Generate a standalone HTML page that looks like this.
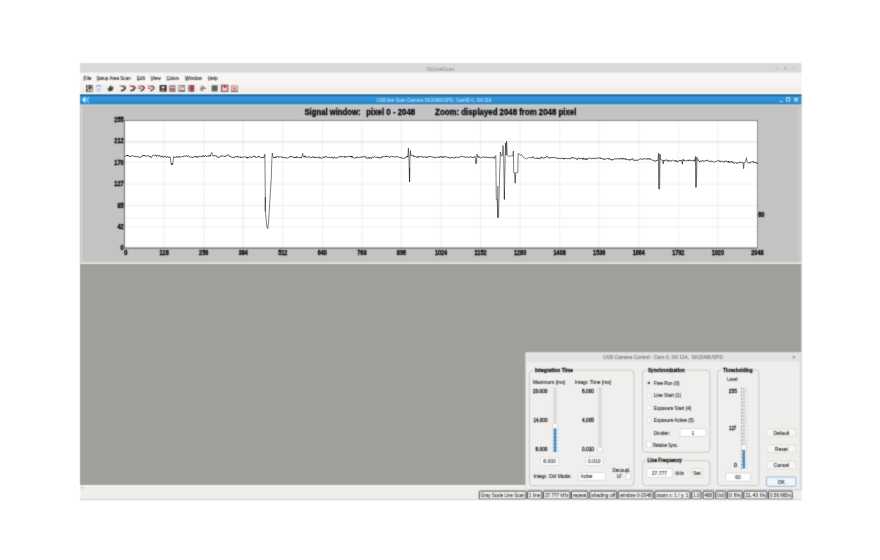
<!DOCTYPE html>
<html lang="en">
<head>
<meta charset="utf-8">
<title>SkLineScan</title>
<style>
html,body{margin:0;padding:0;background:#ffffff;}
body{width:880px;height:560px;overflow:hidden;position:relative;}
svg{position:absolute;left:0;top:0;display:block;}
svg text{font-family:"Liberation Sans",sans-serif;white-space:pre;}
</style>
</head>
<body>
<svg width="880" height="560" viewBox="0 0 880 560" role="img" aria-label="SkLineScan application window">
<defs><filter id="soft" filterUnits="userSpaceOnUse" x="0" y="0" width="880" height="560" color-interpolation-filters="sRGB"><feConvolveMatrix order="3" kernelMatrix="0.062 0.249 0.062 0.249 1 0.249 0.062 0.249 0.062" divisor="2.244" edgeMode="duplicate" preserveAlpha="false"/></filter></defs>
<g filter="url(#soft)">
<rect x="0" y="0" width="880" height="560" fill="#ffffff"/>
<g id="main-window">
<path d="M80.0,72.8 V64.5 Q80.0,63.0 81.5,63.0 H800.0 Q801.5,63.0 801.5,64.5 V72.8 Z" fill="#d9d9d9"/>
<text transform="translate(440.30,70.84) scale(1,1.08)" font-size="5" fill="#9c9c9c" stroke="#9c9c9c" stroke-width="0.12" text-anchor="middle" font-weight="normal" textLength="28.00" lengthAdjust="spacingAndGlyphs" >SkLineScan</text>
<line x1="775.20" y1="68.60" x2="778.80" y2="68.60" stroke="#b4b4b4" stroke-width="0.7" />
<line x1="783.60" y1="68.30" x2="787.00" y2="68.30" stroke="#b4b4b4" stroke-width="0.7" />
<line x1="785.30" y1="66.60" x2="785.30" y2="70.00" stroke="#b4b4b4" stroke-width="0.7" />
<line x1="792.50" y1="66.80" x2="795.50" y2="69.80" stroke="#b4b4b4" stroke-width="0.7" />
<line x1="795.50" y1="66.80" x2="792.50" y2="69.80" stroke="#b4b4b4" stroke-width="0.7" />
<rect x="80.00" y="72.80" width="721.50" height="10.40" fill="#f7f6f4" />
<defs><linearGradient id="tb" x1="0" y1="0" x2="0" y2="1"><stop offset="0" stop-color="#f9f2ee"/><stop offset="0.35" stop-color="#f5f0ec"/><stop offset="0.6" stop-color="#f0eeeb"/><stop offset="1" stop-color="#efeeeb"/></linearGradient></defs>
<rect x="80.00" y="83.20" width="721.50" height="10.30" fill="url(#tb)" />
<rect x="80.00" y="93.20" width="721.50" height="1.50" fill="#ffffff" />
</g>
<g id="menubar">
<text transform="translate(83.50,79.58) scale(1,1.08)" font-size="5.6" fill="#262626" stroke="#262626" stroke-width="0.12" text-anchor="start" font-weight="normal" textLength="8.10" lengthAdjust="spacingAndGlyphs" >File</text>
<line x1="83.50" y1="80.20" x2="85.80" y2="80.20" stroke="#444" stroke-width="0.5" />
<text transform="translate(96.50,79.58) scale(1,1.08)" font-size="5.6" fill="#262626" stroke="#262626" stroke-width="0.12" text-anchor="start" font-weight="normal" textLength="34.20" lengthAdjust="spacingAndGlyphs" >Setup Area Scan</text>
<line x1="96.50" y1="80.20" x2="99.10" y2="80.20" stroke="#444" stroke-width="0.5" />
<text transform="translate(137.00,79.58) scale(1,1.08)" font-size="5.6" fill="#262626" stroke="#262626" stroke-width="0.12" text-anchor="start" font-weight="normal" textLength="8.00" lengthAdjust="spacingAndGlyphs" >Edit</text>
<line x1="137.00" y1="80.20" x2="139.60" y2="80.20" stroke="#444" stroke-width="0.5" />
<text transform="translate(150.40,79.58) scale(1,1.08)" font-size="5.6" fill="#262626" stroke="#262626" stroke-width="0.12" text-anchor="start" font-weight="normal" textLength="10.30" lengthAdjust="spacingAndGlyphs" >View</text>
<line x1="150.40" y1="80.20" x2="153.00" y2="80.20" stroke="#444" stroke-width="0.5" />
<text transform="translate(166.50,79.58) scale(1,1.08)" font-size="5.6" fill="#262626" stroke="#262626" stroke-width="0.12" text-anchor="start" font-weight="normal" textLength="12.50" lengthAdjust="spacingAndGlyphs" >Colors</text>
<line x1="166.50" y1="80.20" x2="169.30" y2="80.20" stroke="#444" stroke-width="0.5" />
<text transform="translate(185.00,79.58) scale(1,1.08)" font-size="5.6" fill="#262626" stroke="#262626" stroke-width="0.12" text-anchor="start" font-weight="normal" textLength="17.00" lengthAdjust="spacingAndGlyphs" >Window</text>
<line x1="185.00" y1="80.20" x2="188.60" y2="80.20" stroke="#444" stroke-width="0.5" />
<text transform="translate(208.00,79.58) scale(1,1.08)" font-size="5.6" fill="#262626" stroke="#262626" stroke-width="0.12" text-anchor="start" font-weight="normal" textLength="9.60" lengthAdjust="spacingAndGlyphs" >Help</text>
<line x1="208.00" y1="80.20" x2="210.80" y2="80.20" stroke="#444" stroke-width="0.5" />
</g>
<g id="toolbar">
<rect x="86.00" y="85.20" width="6.60" height="6.50" fill="#3c3c3c" />
<rect x="87.00" y="86.10" width="1.90" height="1.40" fill="#e2e2e2" />
<rect x="90.40" y="86.00" width="1.70" height="1.00" fill="#a0a0a0" />
<rect x="86.00" y="87.90" width="2.60" height="0.80" fill="#e9e7e5" />
<rect x="90.60" y="87.90" width="2.00" height="0.80" fill="#d5d3d1" />
<rect x="87.60" y="89.30" width="1.90" height="1.70" fill="#f2f2f2" />
<rect x="90.20" y="89.30" width="1.80" height="1.70" fill="#f6f6f6" />
<rect x="95.90" y="85.20" width="5.30" height="6.30" fill="#d3d6ee" />
<rect x="95.90" y="85.20" width="5.30" height="1.20" fill="#a0a5d2" />
<rect x="96.80" y="86.90" width="3.60" height="1.70" fill="#f6f7fd" />
<rect x="98.00" y="88.60" width="1.00" height="2.50" fill="#8d94c9" />
<rect x="96.60" y="89.00" width="1.20" height="2.00" fill="#eceef9" />
<rect x="99.30" y="89.00" width="1.20" height="2.00" fill="#eff0fa" />
<path d="M107.7,89.3 L110.5,85.6 L113.6,87.3 L112.3,90.4 L109.6,91.4 Z" fill="#363837" />
<ellipse cx="109.2" cy="89.5" rx="1.35" ry="1.5" fill="#1a6a52"/>
<rect x="111.00" y="86.80" width="1.40" height="0.80" fill="#c9c9c9" />
<path d="M119.70,85.8 L122.40,86.2" fill="none" stroke="#d8345c" stroke-width="1.1" />
<path d="M122.20,86.2 Q125.90,86.6 125.40,88.1 Q124.60,89.9 120.90,91.0" fill="none" stroke="#3a3839" stroke-width="1.45" />
<path d="M129.25,85.8 L131.95,86.2" fill="none" stroke="#d8345c" stroke-width="1.1" />
<path d="M131.75,86.2 Q135.45,86.6 134.95,88.1 Q134.15,89.9 130.45,91.0" fill="none" stroke="#3a3839" stroke-width="1.45" />
<path d="M134.6,86.9 L135.6,85.9" fill="none" stroke="#8c8c8c" stroke-width="0.7" />
<rect x="138.00" y="85.60" width="2.80" height="1.00" fill="#e23258" />
<rect x="137.90" y="87.70" width="3.50" height="1.10" fill="#e23258" />
<path d="M141.20,86.0 Q144.70,86.6 144.20,88.0 Q143.50,89.8 140.60,91.0" fill="none" stroke="#3f393b" stroke-width="1.4" />
<rect x="147.80" y="85.60" width="2.80" height="1.00" fill="#e23258" />
<rect x="147.70" y="87.70" width="3.50" height="1.10" fill="#e23258" />
<path d="M151.00,86.0 Q154.50,86.6 154.00,88.0 Q153.30,89.8 150.40,91.0" fill="none" stroke="#575153" stroke-width="1.4" />
<rect x="159.60" y="85.10" width="6.70" height="6.40" fill="#2e2e2e" />
<rect x="161.60" y="86.40" width="3.10" height="1.70" fill="#f2f2f2" />
<rect x="161.40" y="88.40" width="3.30" height="1.60" fill="#c2526c" />
<rect x="160.40" y="90.20" width="4.40" height="0.80" fill="#7a7a7a" />
<rect x="165.10" y="85.10" width="1.20" height="6.40" fill="#141414" />
<rect x="169.10" y="85.20" width="6.40" height="6.30" fill="#8d8587" />
<rect x="169.90" y="86.00" width="4.90" height="0.60" fill="#a9a3a4" />
<rect x="169.90" y="87.10" width="4.90" height="0.80" fill="#ecdadf" />
<rect x="169.90" y="88.30" width="4.90" height="1.30" fill="#d04a6c" />
<rect x="169.90" y="89.90" width="4.90" height="0.50" fill="#e3c3cb" />
<rect x="169.90" y="90.70" width="5.60" height="0.80" fill="#8a3048" />
<rect x="178.40" y="85.10" width="6.50" height="6.40" fill="#7d7b7b" />
<rect x="179.40" y="86.10" width="4.60" height="4.20" fill="#f1eeee" />
<path d="M180.6,88.6 L184.2,85.7" fill="none" stroke="#df5c80" stroke-width="1.25" />
<rect x="179.20" y="90.20" width="5.70" height="1.30" fill="#5f5f5f" />
<rect x="188.00" y="85.20" width="1.60" height="6.20" fill="#8a8686" />
<rect x="189.90" y="85.10" width="4.30" height="6.50" fill="#8a2a46" />
<rect x="190.60" y="86.70" width="3.00" height="0.80" fill="#d9889e" />
<rect x="190.60" y="89.20" width="3.00" height="0.80" fill="#cf7a92" />
<path d="M201.6,85.7 L203.6,87.1" fill="none" stroke="#505050" stroke-width="1.0" />
<path d="M200.0,88.1 H205.0" fill="none" stroke="#484848" stroke-width="1.0" />
<path d="M204.6,87.2 L206.3,88.2 L204.6,89.1 Z" fill="#5c5c5c" />
<path d="M200.3,90.0 H203.4" fill="none" stroke="#555" stroke-width="1.1" />
<rect x="211.70" y="85.20" width="5.90" height="6.20" fill="#5b5f5d" />
<rect x="211.70" y="85.20" width="5.90" height="0.80" fill="#8f9290" />
<path d="M213.6,86.2 V91.3 M215.7,86.2 V91.3" fill="none" stroke="#6d716f" stroke-width="0.5" />
<rect x="220.60" y="84.20" width="8.00" height="7.80" fill="#dad6d3" />
<rect x="221.00" y="84.80" width="7.30" height="7.00" fill="#585656" />
<rect x="222.00" y="85.60" width="5.40" height="5.30" fill="#f0c4c6" />
<rect x="223.40" y="85.40" width="2.80" height="2.20" fill="#e01432" />
<rect x="224.60" y="88.90" width="1.40" height="1.30" fill="#ffffff" />
<rect x="231.00" y="85.50" width="6.80" height="6.10" fill="#8f7f7d" />
<rect x="231.70" y="86.20" width="5.40" height="4.50" fill="#f6c9c9" />
<path d="M233.6,87.2 L236.3,88.4 L233.6,89.6 Z" fill="#e02034" />
<rect x="231.00" y="90.80" width="6.80" height="0.80" fill="#4e4646" />
</g>
<rect x="80.00" y="263.60" width="721.50" height="221.60" fill="#a19f9b" />
<g id="signal-window">
<defs><linearGradient id="bl" x1="0" y1="0" x2="0" y2="1"><stop offset="0" stop-color="#185a8a"/><stop offset="0.1" stop-color="#1f70a8"/><stop offset="0.24" stop-color="#3798de"/><stop offset="0.65" stop-color="#2c8dcf"/><stop offset="1" stop-color="#2983c1"/></linearGradient></defs>
<rect x="80.00" y="105.00" width="721.50" height="158.60" fill="#c3c3c3" />
<line x1="80.40" y1="105.00" x2="80.40" y2="263.60" stroke="#b4b4b4" stroke-width="0.8" />
<line x1="81.50" y1="105.00" x2="81.50" y2="262.80" stroke="#dadada" stroke-width="1.2" />
<rect x="797.00" y="105.00" width="4.50" height="158.00" fill="#c9c9c9" />
<line x1="80.50" y1="263.20" x2="801.50" y2="263.20" stroke="#f2f2f2" stroke-width="1.3" />
<rect x="80.00" y="104.30" width="721.50" height="1.70" fill="#cecece" />
<rect x="80.00" y="94.60" width="721.50" height="9.80" fill="url(#bl)" />
<rect x="80.00" y="94.60" width="721.50" height="1.10" fill="#165686" />
<path d="M81.9,99.8 L85.4,96.1 L85.4,103.6 Z" fill="#b5ecff"/>
<path d="M85.6,99.8 L88.9,96.0 L88.9,98.4 L87.4,99.8 L88.9,101.2 L88.9,103.7 Z" fill="#74cdf6"/>
<path d="M83.2,99.8 L85.0,98.0 L85.0,101.6 Z" fill="#ffffff"/>
<text transform="translate(376.40,102.01) scale(1,1.08)" font-size="4.9" fill="#bfdcf1" stroke="#bfdcf1" stroke-width="0.12" text-anchor="start" font-weight="normal" textLength="114.90" lengthAdjust="spacingAndGlyphs" >USB line Scan Camera SK2048USPD, CamID 0, SN 114</text>
<line x1="779.20" y1="101.60" x2="782.80" y2="101.60" stroke="#b4d5ee" stroke-width="1.0" />
<rect x="786.4" y="97.6" width="3.4" height="3.6" fill="none" stroke="#d8ecf9" stroke-width="0.8"/>
<line x1="786.40" y1="97.90" x2="789.80" y2="97.90" stroke="#b4d5ee" stroke-width="1.1" />
<line x1="794.20" y1="97.60" x2="798.00" y2="101.60" stroke="#cfe4f4" stroke-width="1.2" />
<line x1="798.00" y1="97.60" x2="794.20" y2="101.60" stroke="#cfe4f4" stroke-width="1.2" />
<text transform="translate(304.40,115.40) scale(1,1.08)" font-size="9.0" fill="#000" stroke="#000" stroke-width="0.28" text-anchor="start" font-weight="bold" textLength="56.20" lengthAdjust="spacingAndGlyphs" >Signal window:</text>
<text transform="translate(366.20,115.40) scale(1,1.08)" font-size="9.0" fill="#000" stroke="#000" stroke-width="0.28" text-anchor="start" font-weight="bold" textLength="49.00" lengthAdjust="spacingAndGlyphs" >pixel 0 - 2048</text>
<text transform="translate(435.10,115.40) scale(1,1.08)" font-size="9.0" fill="#000" stroke="#000" stroke-width="0.28" text-anchor="start" font-weight="bold" textLength="141.30" lengthAdjust="spacingAndGlyphs" >Zoom: displayed 2048 from 2048 pixel</text>
<rect x="124.60" y="120.60" width="632.80" height="127.50" fill="#ffffff" />
<line x1="164.15" y1="120.60" x2="164.15" y2="248.10" stroke="#e3e3e3" stroke-width="0.6" />
<line x1="203.70" y1="120.60" x2="203.70" y2="248.10" stroke="#e3e3e3" stroke-width="0.6" />
<line x1="243.25" y1="120.60" x2="243.25" y2="248.10" stroke="#e3e3e3" stroke-width="0.6" />
<line x1="282.80" y1="120.60" x2="282.80" y2="248.10" stroke="#e3e3e3" stroke-width="0.6" />
<line x1="322.35" y1="120.60" x2="322.35" y2="248.10" stroke="#e3e3e3" stroke-width="0.6" />
<line x1="361.90" y1="120.60" x2="361.90" y2="248.10" stroke="#e3e3e3" stroke-width="0.6" />
<line x1="401.45" y1="120.60" x2="401.45" y2="248.10" stroke="#e3e3e3" stroke-width="0.6" />
<line x1="441.00" y1="120.60" x2="441.00" y2="248.10" stroke="#e3e3e3" stroke-width="0.6" />
<line x1="480.55" y1="120.60" x2="480.55" y2="248.10" stroke="#e3e3e3" stroke-width="0.6" />
<line x1="520.10" y1="120.60" x2="520.10" y2="248.10" stroke="#e3e3e3" stroke-width="0.6" />
<line x1="559.65" y1="120.60" x2="559.65" y2="248.10" stroke="#e3e3e3" stroke-width="0.6" />
<line x1="599.20" y1="120.60" x2="599.20" y2="248.10" stroke="#e3e3e3" stroke-width="0.6" />
<line x1="638.75" y1="120.60" x2="638.75" y2="248.10" stroke="#e3e3e3" stroke-width="0.6" />
<line x1="678.30" y1="120.60" x2="678.30" y2="248.10" stroke="#e3e3e3" stroke-width="0.6" />
<line x1="717.85" y1="120.60" x2="717.85" y2="248.10" stroke="#e3e3e3" stroke-width="0.6" />
<line x1="124.60" y1="141.90" x2="757.40" y2="141.90" stroke="#a8a8a8" stroke-width="0.7" stroke-dasharray="1.3 1.0"/>
<line x1="124.60" y1="162.30" x2="757.40" y2="162.30" stroke="#e4e4e4" stroke-width="0.6" />
<line x1="124.60" y1="184.10" x2="757.40" y2="184.10" stroke="#e4e4e4" stroke-width="0.6" />
<line x1="124.60" y1="205.50" x2="757.40" y2="205.50" stroke="#e4e4e4" stroke-width="0.6" />
<line x1="124.60" y1="226.80" x2="757.40" y2="226.80" stroke="#e4e4e4" stroke-width="0.6" />
<line x1="124.60" y1="217.80" x2="757.40" y2="217.80" stroke="#e4e4e4" stroke-width="0.6" />
<rect x="124.6" y="120.6" width="632.80" height="127.50" fill="none" stroke="#8a8a8a" stroke-width="0.6"/>
<line x1="124.60" y1="120.50" x2="757.40" y2="120.50" stroke="#787878" stroke-width="0.75" />
<line x1="757.50" y1="120.60" x2="757.50" y2="248.10" stroke="#858585" stroke-width="0.75" />
<line x1="124.60" y1="248.10" x2="757.40" y2="248.10" stroke="#4a4a4a" stroke-width="0.8" />
<line x1="124.40" y1="120.60" x2="124.40" y2="248.10" stroke="#6f6f6f" stroke-width="0.9" />
<text transform="translate(114.25,122.49) scale(1,1.08)" font-size="6.4" fill="#000" stroke="#000" stroke-width="0.28" text-anchor="start" font-weight="bold" textLength="9.45" lengthAdjust="spacingAndGlyphs" >255</text>
<text transform="translate(114.25,143.49) scale(1,1.08)" font-size="6.4" fill="#000" stroke="#000" stroke-width="0.28" text-anchor="start" font-weight="bold" textLength="9.45" lengthAdjust="spacingAndGlyphs" >212</text>
<text transform="translate(114.25,164.89) scale(1,1.08)" font-size="6.4" fill="#000" stroke="#000" stroke-width="0.28" text-anchor="start" font-weight="bold" textLength="9.45" lengthAdjust="spacingAndGlyphs" >170</text>
<text transform="translate(114.25,186.29) scale(1,1.08)" font-size="6.4" fill="#000" stroke="#000" stroke-width="0.28" text-anchor="start" font-weight="bold" textLength="9.45" lengthAdjust="spacingAndGlyphs" >127</text>
<text transform="translate(117.40,207.69) scale(1,1.08)" font-size="6.4" fill="#000" stroke="#000" stroke-width="0.28" text-anchor="start" font-weight="bold" textLength="6.30" lengthAdjust="spacingAndGlyphs" >85</text>
<text transform="translate(117.40,228.59) scale(1,1.08)" font-size="6.4" fill="#000" stroke="#000" stroke-width="0.28" text-anchor="start" font-weight="bold" textLength="6.30" lengthAdjust="spacingAndGlyphs" >42</text>
<text transform="translate(120.55,249.79) scale(1,1.08)" font-size="6.4" fill="#000" stroke="#000" stroke-width="0.28" text-anchor="start" font-weight="bold" textLength="3.15" lengthAdjust="spacingAndGlyphs" >0</text>
<text transform="translate(124.08,255.21) scale(1,1.08)" font-size="6.2" fill="#000" stroke="#000" stroke-width="0.28" text-anchor="start" font-weight="bold" textLength="3.45" lengthAdjust="spacingAndGlyphs" >0</text>
<text transform="translate(159.57,255.21) scale(1,1.08)" font-size="6.2" fill="#000" stroke="#000" stroke-width="0.28" text-anchor="start" font-weight="bold" textLength="9.15" lengthAdjust="spacingAndGlyphs" >128</text>
<text transform="translate(199.12,255.21) scale(1,1.08)" font-size="6.2" fill="#000" stroke="#000" stroke-width="0.28" text-anchor="start" font-weight="bold" textLength="9.15" lengthAdjust="spacingAndGlyphs" >256</text>
<text transform="translate(238.68,255.21) scale(1,1.08)" font-size="6.2" fill="#000" stroke="#000" stroke-width="0.28" text-anchor="start" font-weight="bold" textLength="9.15" lengthAdjust="spacingAndGlyphs" >384</text>
<text transform="translate(278.22,255.21) scale(1,1.08)" font-size="6.2" fill="#000" stroke="#000" stroke-width="0.28" text-anchor="start" font-weight="bold" textLength="9.15" lengthAdjust="spacingAndGlyphs" >512</text>
<text transform="translate(317.78,255.21) scale(1,1.08)" font-size="6.2" fill="#000" stroke="#000" stroke-width="0.28" text-anchor="start" font-weight="bold" textLength="9.15" lengthAdjust="spacingAndGlyphs" >640</text>
<text transform="translate(357.32,255.21) scale(1,1.08)" font-size="6.2" fill="#000" stroke="#000" stroke-width="0.28" text-anchor="start" font-weight="bold" textLength="9.15" lengthAdjust="spacingAndGlyphs" >768</text>
<text transform="translate(396.87,255.21) scale(1,1.08)" font-size="6.2" fill="#000" stroke="#000" stroke-width="0.28" text-anchor="start" font-weight="bold" textLength="9.15" lengthAdjust="spacingAndGlyphs" >896</text>
<text transform="translate(434.90,255.21) scale(1,1.08)" font-size="6.2" fill="#000" stroke="#000" stroke-width="0.28" text-anchor="start" font-weight="bold" textLength="12.20" lengthAdjust="spacingAndGlyphs" >1024</text>
<text transform="translate(474.45,255.21) scale(1,1.08)" font-size="6.2" fill="#000" stroke="#000" stroke-width="0.28" text-anchor="start" font-weight="bold" textLength="12.20" lengthAdjust="spacingAndGlyphs" >1152</text>
<text transform="translate(514.00,255.21) scale(1,1.08)" font-size="6.2" fill="#000" stroke="#000" stroke-width="0.28" text-anchor="start" font-weight="bold" textLength="12.20" lengthAdjust="spacingAndGlyphs" >1280</text>
<text transform="translate(553.55,255.21) scale(1,1.08)" font-size="6.2" fill="#000" stroke="#000" stroke-width="0.28" text-anchor="start" font-weight="bold" textLength="12.20" lengthAdjust="spacingAndGlyphs" >1408</text>
<text transform="translate(593.10,255.21) scale(1,1.08)" font-size="6.2" fill="#000" stroke="#000" stroke-width="0.28" text-anchor="start" font-weight="bold" textLength="12.20" lengthAdjust="spacingAndGlyphs" >1536</text>
<text transform="translate(632.65,255.21) scale(1,1.08)" font-size="6.2" fill="#000" stroke="#000" stroke-width="0.28" text-anchor="start" font-weight="bold" textLength="12.20" lengthAdjust="spacingAndGlyphs" >1664</text>
<text transform="translate(672.20,255.21) scale(1,1.08)" font-size="6.2" fill="#000" stroke="#000" stroke-width="0.28" text-anchor="start" font-weight="bold" textLength="12.20" lengthAdjust="spacingAndGlyphs" >1792</text>
<text transform="translate(711.75,255.21) scale(1,1.08)" font-size="6.2" fill="#000" stroke="#000" stroke-width="0.28" text-anchor="start" font-weight="bold" textLength="12.20" lengthAdjust="spacingAndGlyphs" >1920</text>
<text transform="translate(751.30,255.21) scale(1,1.08)" font-size="6.2" fill="#000" stroke="#000" stroke-width="0.28" text-anchor="start" font-weight="bold" textLength="12.20" lengthAdjust="spacingAndGlyphs" >2048</text>
<text transform="translate(758.20,217.41) scale(1,1.08)" font-size="6.2" fill="#000" stroke="#000" stroke-width="0.28" text-anchor="start" font-weight="bold" textLength="6.20" lengthAdjust="spacingAndGlyphs" >60</text>
</g>
<g id="statusbar">
<rect x="80.00" y="485.20" width="721.50" height="14.80" fill="#efeeeb" />
<line x1="80.00" y1="485.60" x2="801.50" y2="485.60" stroke="#f8f8f6" stroke-width="0.8" />
<line x1="80.00" y1="499.60" x2="801.50" y2="499.60" stroke="#cfcfcd" stroke-width="0.8" />
<path d="M81.6,487.4 l1.6,1.6 m0,-1.6 l-1.6,0 " stroke="#888" stroke-width="0.5"/>
</g>
<g id="camera-dialog">
<rect x="525.60" y="352.60" width="275.90" height="137.20" fill="#efeeec" />
<rect x="525.60" y="352.60" width="275.90" height="9.40" fill="#e3e3e3" />
<rect x="799.60" y="353.60" width="1.90" height="136.20" fill="#dededc" />
<line x1="525.60" y1="353.00" x2="801.50" y2="353.00" stroke="#efefef" stroke-width="0.8" />
<rect x="525.6" y="352.6" width="275.9" height="137.2" fill="none" stroke="#d2d1cf" stroke-width="0.6"/>
<text transform="translate(603.00,359.44) scale(1,1.08)" font-size="5" fill="#7a7a7a" stroke="#7a7a7a" stroke-width="0.12" text-anchor="start" font-weight="normal" textLength="120.00" lengthAdjust="spacingAndGlyphs" >USB Camera Control - Cam 0, SN 114,  SK2048USPD</text>
<line x1="792.60" y1="356.00" x2="795.00" y2="358.40" stroke="#6e6e6e" stroke-width="0.7" />
<line x1="795.00" y1="356.00" x2="792.60" y2="358.40" stroke="#6e6e6e" stroke-width="0.7" />
<rect x="529.4" y="370.2" width="104.60" height="115.60" rx="3.2" fill="#f0efed" stroke="#c0bfbc" stroke-width="0.8"/>
<rect x="533.50" y="367.20" width="41.00" height="6.00" fill="#efeeec" />
<text transform="translate(535.00,372.08) scale(1,1.08)" font-size="5.1" fill="#1e1e1e" stroke="#1e1e1e" stroke-width="0.28" text-anchor="start" font-weight="bold" textLength="38.00" lengthAdjust="spacingAndGlyphs" >Integration Time</text>
<rect x="642.5" y="370.1" width="67.50" height="82.20" rx="3.2" fill="#f0efed" stroke="#c0bfbc" stroke-width="0.8"/>
<rect x="646.40" y="367.10" width="39.90" height="6.00" fill="#efeeec" />
<text transform="translate(647.90,371.98) scale(1,1.08)" font-size="5.1" fill="#1e1e1e" stroke="#1e1e1e" stroke-width="0.28" text-anchor="start" font-weight="bold" textLength="36.90" lengthAdjust="spacingAndGlyphs" >Synchronization</text>
<rect x="642.5" y="460.6" width="67.50" height="25.00" rx="3.2" fill="#f0efed" stroke="#c0bfbc" stroke-width="0.8"/>
<rect x="646.00" y="457.60" width="37.40" height="6.00" fill="#efeeec" />
<text transform="translate(647.50,462.48) scale(1,1.08)" font-size="5.1" fill="#1e1e1e" stroke="#1e1e1e" stroke-width="0.28" text-anchor="start" font-weight="bold" textLength="34.40" lengthAdjust="spacingAndGlyphs" >Line Frequency</text>
<rect x="717.5" y="370.1" width="41.30" height="115.50" rx="3.2" fill="#f0efed" stroke="#c0bfbc" stroke-width="0.8"/>
<rect x="721.50" y="367.10" width="32.50" height="6.00" fill="#efeeec" />
<text transform="translate(723.00,371.98) scale(1,1.08)" font-size="5.1" fill="#1e1e1e" stroke="#1e1e1e" stroke-width="0.28" text-anchor="start" font-weight="bold" textLength="29.50" lengthAdjust="spacingAndGlyphs" >Thresholding</text>
<text transform="translate(533.00,384.34) scale(1,1.08)" font-size="5" fill="#2a2a2a" stroke="#2a2a2a" stroke-width="0.12" text-anchor="start" font-weight="normal" textLength="32.00" lengthAdjust="spacingAndGlyphs" >Maximum [ms]</text>
<text transform="translate(575.00,384.34) scale(1,1.08)" font-size="5" fill="#2a2a2a" stroke="#2a2a2a" stroke-width="0.12" text-anchor="start" font-weight="normal" textLength="36.00" lengthAdjust="spacingAndGlyphs" >Integr. Time [ms]</text>
<text transform="translate(533.00,393.02) scale(1,1.08)" font-size="5.2" fill="#1c1c1c" stroke="#1c1c1c" stroke-width="0.27" text-anchor="start" font-weight="normal" textLength="14.50" lengthAdjust="spacingAndGlyphs" >20.000</text>
<text transform="translate(533.40,421.82) scale(1,1.08)" font-size="5.2" fill="#1c1c1c" stroke="#1c1c1c" stroke-width="0.27" text-anchor="start" font-weight="normal" textLength="14.10" lengthAdjust="spacingAndGlyphs" >14.000</text>
<text transform="translate(535.60,450.72) scale(1,1.08)" font-size="5.2" fill="#1c1c1c" stroke="#1c1c1c" stroke-width="0.27" text-anchor="start" font-weight="normal" textLength="11.90" lengthAdjust="spacingAndGlyphs" >8.000</text>
<text transform="translate(582.00,393.02) scale(1,1.08)" font-size="5.2" fill="#1c1c1c" stroke="#1c1c1c" stroke-width="0.27" text-anchor="start" font-weight="normal" textLength="12.00" lengthAdjust="spacingAndGlyphs" >8.000</text>
<text transform="translate(582.00,421.82) scale(1,1.08)" font-size="5.2" fill="#1c1c1c" stroke="#1c1c1c" stroke-width="0.27" text-anchor="start" font-weight="normal" textLength="12.00" lengthAdjust="spacingAndGlyphs" >4.005</text>
<text transform="translate(582.00,450.72) scale(1,1.08)" font-size="5.2" fill="#1c1c1c" stroke="#1c1c1c" stroke-width="0.27" text-anchor="start" font-weight="normal" textLength="12.00" lengthAdjust="spacingAndGlyphs" >0.010</text>
<line x1="552.40" y1="388.50" x2="557.60" y2="388.50" stroke="#cfcfcf" stroke-width="0.5" />
<line x1="552.40" y1="391.97" x2="557.60" y2="391.97" stroke="#cfcfcf" stroke-width="0.5" />
<line x1="552.40" y1="395.44" x2="557.60" y2="395.44" stroke="#cfcfcf" stroke-width="0.5" />
<line x1="552.40" y1="398.92" x2="557.60" y2="398.92" stroke="#cfcfcf" stroke-width="0.5" />
<line x1="552.40" y1="402.39" x2="557.60" y2="402.39" stroke="#cfcfcf" stroke-width="0.5" />
<line x1="552.40" y1="405.86" x2="557.60" y2="405.86" stroke="#cfcfcf" stroke-width="0.5" />
<line x1="552.40" y1="409.33" x2="557.60" y2="409.33" stroke="#cfcfcf" stroke-width="0.5" />
<line x1="552.40" y1="412.81" x2="557.60" y2="412.81" stroke="#cfcfcf" stroke-width="0.5" />
<line x1="552.40" y1="416.28" x2="557.60" y2="416.28" stroke="#cfcfcf" stroke-width="0.5" />
<line x1="552.40" y1="419.75" x2="557.60" y2="419.75" stroke="#cfcfcf" stroke-width="0.5" />
<line x1="552.40" y1="423.22" x2="557.60" y2="423.22" stroke="#cfcfcf" stroke-width="0.5" />
<line x1="552.40" y1="426.69" x2="557.60" y2="426.69" stroke="#cfcfcf" stroke-width="0.5" />
<line x1="552.40" y1="430.17" x2="557.60" y2="430.17" stroke="#cfcfcf" stroke-width="0.5" />
<line x1="552.40" y1="433.64" x2="557.60" y2="433.64" stroke="#cfcfcf" stroke-width="0.5" />
<line x1="552.40" y1="437.11" x2="557.60" y2="437.11" stroke="#cfcfcf" stroke-width="0.5" />
<line x1="552.40" y1="440.58" x2="557.60" y2="440.58" stroke="#cfcfcf" stroke-width="0.5" />
<line x1="552.40" y1="444.06" x2="557.60" y2="444.06" stroke="#cfcfcf" stroke-width="0.5" />
<line x1="552.40" y1="447.53" x2="557.60" y2="447.53" stroke="#cfcfcf" stroke-width="0.5" />
<line x1="552.40" y1="451.00" x2="557.60" y2="451.00" stroke="#cfcfcf" stroke-width="0.5" />
<rect x="553.80" y="387.50" width="2.40" height="64.50" fill="#d6d6d4" />
<rect x="553.90" y="427.30" width="2.20" height="24.70" fill="#3085c8" />
<line x1="552.40" y1="430.17" x2="557.60" y2="430.17" stroke="#4f9ad6" stroke-width="0.55" />
<line x1="552.40" y1="433.64" x2="557.60" y2="433.64" stroke="#4f9ad6" stroke-width="0.55" />
<line x1="552.40" y1="437.11" x2="557.60" y2="437.11" stroke="#4f9ad6" stroke-width="0.55" />
<line x1="552.40" y1="440.58" x2="557.60" y2="440.58" stroke="#4f9ad6" stroke-width="0.55" />
<line x1="552.40" y1="444.06" x2="557.60" y2="444.06" stroke="#4f9ad6" stroke-width="0.55" />
<line x1="552.40" y1="447.53" x2="557.60" y2="447.53" stroke="#4f9ad6" stroke-width="0.55" />
<line x1="552.40" y1="451.00" x2="557.60" y2="451.00" stroke="#4f9ad6" stroke-width="0.55" />
<rect x="552.60" y="423.40" width="4.8" height="4.8" rx="0.8" fill="#fdfdfd" stroke="#c4c4c4" stroke-width="0.5"/>
<line x1="597.40" y1="388.50" x2="602.60" y2="388.50" stroke="#cfcfcf" stroke-width="0.5" />
<line x1="597.40" y1="391.97" x2="602.60" y2="391.97" stroke="#cfcfcf" stroke-width="0.5" />
<line x1="597.40" y1="395.44" x2="602.60" y2="395.44" stroke="#cfcfcf" stroke-width="0.5" />
<line x1="597.40" y1="398.92" x2="602.60" y2="398.92" stroke="#cfcfcf" stroke-width="0.5" />
<line x1="597.40" y1="402.39" x2="602.60" y2="402.39" stroke="#cfcfcf" stroke-width="0.5" />
<line x1="597.40" y1="405.86" x2="602.60" y2="405.86" stroke="#cfcfcf" stroke-width="0.5" />
<line x1="597.40" y1="409.33" x2="602.60" y2="409.33" stroke="#cfcfcf" stroke-width="0.5" />
<line x1="597.40" y1="412.81" x2="602.60" y2="412.81" stroke="#cfcfcf" stroke-width="0.5" />
<line x1="597.40" y1="416.28" x2="602.60" y2="416.28" stroke="#cfcfcf" stroke-width="0.5" />
<line x1="597.40" y1="419.75" x2="602.60" y2="419.75" stroke="#cfcfcf" stroke-width="0.5" />
<line x1="597.40" y1="423.22" x2="602.60" y2="423.22" stroke="#cfcfcf" stroke-width="0.5" />
<line x1="597.40" y1="426.69" x2="602.60" y2="426.69" stroke="#cfcfcf" stroke-width="0.5" />
<line x1="597.40" y1="430.17" x2="602.60" y2="430.17" stroke="#cfcfcf" stroke-width="0.5" />
<line x1="597.40" y1="433.64" x2="602.60" y2="433.64" stroke="#cfcfcf" stroke-width="0.5" />
<line x1="597.40" y1="437.11" x2="602.60" y2="437.11" stroke="#cfcfcf" stroke-width="0.5" />
<line x1="597.40" y1="440.58" x2="602.60" y2="440.58" stroke="#cfcfcf" stroke-width="0.5" />
<line x1="597.40" y1="444.06" x2="602.60" y2="444.06" stroke="#cfcfcf" stroke-width="0.5" />
<line x1="597.40" y1="447.53" x2="602.60" y2="447.53" stroke="#cfcfcf" stroke-width="0.5" />
<line x1="597.40" y1="451.00" x2="602.60" y2="451.00" stroke="#cfcfcf" stroke-width="0.5" />
<rect x="598.80" y="387.50" width="2.40" height="64.50" fill="#d6d6d4" />
<rect x="597.60" y="447.00" width="4.8" height="4.8" rx="0.8" fill="#fdfdfd" stroke="#c4c4c4" stroke-width="0.5"/>
<rect x="540.6" y="457.2" width="17.90" height="8.40" rx="0.8" fill="#ffffff" stroke="#d0cfcc" stroke-width="0.7"/>
<text transform="translate(549.55,463.44) scale(1,1.08)" font-size="5" fill="#3c3c3c" stroke="#3c3c3c" stroke-width="0.12" text-anchor="middle" font-weight="normal" >8.000</text>
<rect x="585.6" y="457.2" width="17.40" height="8.40" rx="0.8" fill="#ffffff" stroke="#d0cfcc" stroke-width="0.7"/>
<text transform="translate(594.30,463.44) scale(1,1.08)" font-size="5" fill="#3c3c3c" stroke="#3c3c3c" stroke-width="0.12" text-anchor="middle" font-weight="normal" >0.010</text>
<text transform="translate(533.50,478.44) scale(1,1.08)" font-size="5" fill="#2a2a2a" stroke="#2a2a2a" stroke-width="0.12" text-anchor="start" font-weight="normal" textLength="38.00" lengthAdjust="spacingAndGlyphs" >Integr. Ctrl Mode:</text>
<rect x="578.5" y="472.5" width="26.80" height="7.80" rx="0.8" fill="#ffffff" stroke="#d0cfcc" stroke-width="0.7"/>
<text transform="translate(580.80,478.44) scale(1,1.08)" font-size="5" fill="#2a2a2a" stroke="#2a2a2a" stroke-width="0.12" text-anchor="start" font-weight="normal" textLength="11.60" lengthAdjust="spacingAndGlyphs" >Active</text>
<text transform="translate(612.50,471.64) scale(1,1.08)" font-size="5" fill="#2a2a2a" stroke="#2a2a2a" stroke-width="0.12" text-anchor="start" font-weight="normal" textLength="18.10" lengthAdjust="spacingAndGlyphs" >Decoupl.</text>
<text transform="translate(616.90,478.44) scale(1,1.08)" font-size="5" fill="#2a2a2a" stroke="#2a2a2a" stroke-width="0.12" text-anchor="start" font-weight="normal" textLength="5.00" lengthAdjust="spacingAndGlyphs" >LF</text>
<rect x="626" y="473.6" width="4.80" height="6.00" rx="0.8" fill="#ffffff" stroke="#d0cfcc" stroke-width="0.7"/>
<circle cx="648.8" cy="382.9" r="2.3" fill="#ffffff" stroke="#d0cfcc" stroke-width="0.6"/>
<circle cx="648.8" cy="382.9" r="1.15" fill="#3c3c3c"/>
<circle cx="648.8" cy="395.4" r="2.3" fill="#ffffff" stroke="#d0cfcc" stroke-width="0.6"/>
<circle cx="648.8" cy="407.8" r="2.3" fill="#ffffff" stroke="#d0cfcc" stroke-width="0.6"/>
<circle cx="648.8" cy="420.0" r="2.3" fill="#ffffff" stroke="#d0cfcc" stroke-width="0.6"/>
<text transform="translate(653.80,384.84) scale(1,1.08)" font-size="5" fill="#2a2a2a" stroke="#2a2a2a" stroke-width="0.12" text-anchor="start" font-weight="normal" textLength="25.60" lengthAdjust="spacingAndGlyphs" >Free Run (0)</text>
<text transform="translate(653.80,397.34) scale(1,1.08)" font-size="5" fill="#2a2a2a" stroke="#2a2a2a" stroke-width="0.12" text-anchor="start" font-weight="normal" textLength="27.20" lengthAdjust="spacingAndGlyphs" >Line Start (1)</text>
<text transform="translate(653.80,409.74) scale(1,1.08)" font-size="5" fill="#2a2a2a" stroke="#2a2a2a" stroke-width="0.12" text-anchor="start" font-weight="normal" textLength="37.50" lengthAdjust="spacingAndGlyphs" >Exposure Start (4)</text>
<text transform="translate(653.80,421.94) scale(1,1.08)" font-size="5" fill="#2a2a2a" stroke="#2a2a2a" stroke-width="0.12" text-anchor="start" font-weight="normal" textLength="40.00" lengthAdjust="spacingAndGlyphs" >Exposure Active (5)</text>
<text transform="translate(653.80,434.94) scale(1,1.08)" font-size="5" fill="#2a2a2a" stroke="#2a2a2a" stroke-width="0.12" text-anchor="start" font-weight="normal" textLength="16.20" lengthAdjust="spacingAndGlyphs" >Divider:</text>
<rect x="680" y="428.7" width="26.00" height="7.80" rx="0.8" fill="#ffffff" stroke="#d0cfcc" stroke-width="0.7"/>
<text transform="translate(693.00,434.64) scale(1,1.08)" font-size="5" fill="#3c3c3c" stroke="#3c3c3c" stroke-width="0.12" text-anchor="middle" font-weight="normal" >1</text>
<rect x="646.3" y="441.3" width="5.30" height="6.20" rx="0.8" fill="#ffffff" stroke="#d0cfcc" stroke-width="0.7"/>
<text transform="translate(653.00,446.54) scale(1,1.08)" font-size="5" fill="#2a2a2a" stroke="#2a2a2a" stroke-width="0.12" text-anchor="start" font-weight="normal" textLength="25.00" lengthAdjust="spacingAndGlyphs" >Relative Sync.</text>
<rect x="646.5" y="468.5" width="25.80" height="8.80" rx="0.8" fill="#ffffff" stroke="#d0cfcc" stroke-width="0.7"/>
<text transform="translate(659.40,474.94) scale(1,1.08)" font-size="5" fill="#3c3c3c" stroke="#3c3c3c" stroke-width="0.12" text-anchor="middle" font-weight="normal" >27.777</text>
<text transform="translate(675.60,474.54) scale(1,1.08)" font-size="5" fill="#2a2a2a" stroke="#2a2a2a" stroke-width="0.12" text-anchor="start" font-weight="normal" textLength="8.40" lengthAdjust="spacingAndGlyphs" >kHz</text>
<rect x="691.3" y="468.5" width="11.3" height="9" rx="1" fill="#f6f5f3" stroke="#cfceca" stroke-width="0.6"/>
<text transform="translate(696.90,474.94) scale(1,1.08)" font-size="5" fill="#2a2a2a" stroke="#2a2a2a" stroke-width="0.12" text-anchor="middle" font-weight="normal" >Set</text>
<text transform="translate(727.30,381.18) scale(1,1.08)" font-size="5.6" fill="#2a2a2a" stroke="#2a2a2a" stroke-width="0.12" text-anchor="start" font-weight="normal" textLength="10.20" lengthAdjust="spacingAndGlyphs" >Level</text>
<text transform="translate(728.80,393.22) scale(1,1.08)" font-size="5.2" fill="#1c1c1c" stroke="#1c1c1c" stroke-width="0.27" text-anchor="start" font-weight="normal" textLength="8.20" lengthAdjust="spacingAndGlyphs" >255</text>
<text transform="translate(729.00,429.52) scale(1,1.08)" font-size="5.2" fill="#1c1c1c" stroke="#1c1c1c" stroke-width="0.27" text-anchor="start" font-weight="normal" textLength="7.30" lengthAdjust="spacingAndGlyphs" >127</text>
<text transform="translate(734.00,467.22) scale(1,1.08)" font-size="5.2" fill="#1c1c1c" stroke="#1c1c1c" stroke-width="0.27" text-anchor="start" font-weight="normal" textLength="2.90" lengthAdjust="spacingAndGlyphs" >0</text>
<rect x="741.00" y="388.08" width="1.00" height="0.84" fill="#3f3f3f" />
<rect x="746.30" y="388.12" width="0.90" height="0.76" fill="#9a9a9a" />
<rect x="741.00" y="391.54" width="1.00" height="0.84" fill="#3f3f3f" />
<rect x="746.30" y="391.58" width="0.90" height="0.76" fill="#9a9a9a" />
<rect x="741.00" y="394.99" width="1.00" height="0.84" fill="#3f3f3f" />
<rect x="746.30" y="395.03" width="0.90" height="0.76" fill="#9a9a9a" />
<rect x="741.00" y="398.45" width="1.00" height="0.84" fill="#3f3f3f" />
<rect x="746.30" y="398.49" width="0.90" height="0.76" fill="#9a9a9a" />
<rect x="741.00" y="401.91" width="1.00" height="0.84" fill="#3f3f3f" />
<rect x="746.30" y="401.95" width="0.90" height="0.76" fill="#9a9a9a" />
<rect x="741.00" y="405.36" width="1.00" height="0.84" fill="#3f3f3f" />
<rect x="746.30" y="405.40" width="0.90" height="0.76" fill="#9a9a9a" />
<rect x="741.00" y="408.82" width="1.00" height="0.84" fill="#3f3f3f" />
<rect x="746.30" y="408.86" width="0.90" height="0.76" fill="#9a9a9a" />
<rect x="741.00" y="412.28" width="1.00" height="0.84" fill="#3f3f3f" />
<rect x="746.30" y="412.32" width="0.90" height="0.76" fill="#9a9a9a" />
<rect x="741.00" y="415.73" width="1.00" height="0.84" fill="#3f3f3f" />
<rect x="746.30" y="415.77" width="0.90" height="0.76" fill="#9a9a9a" />
<rect x="741.00" y="419.19" width="1.00" height="0.84" fill="#3f3f3f" />
<rect x="746.30" y="419.23" width="0.90" height="0.76" fill="#9a9a9a" />
<rect x="741.00" y="422.65" width="1.00" height="0.84" fill="#3f3f3f" />
<rect x="746.30" y="422.69" width="0.90" height="0.76" fill="#9a9a9a" />
<rect x="741.00" y="426.10" width="1.00" height="0.84" fill="#3f3f3f" />
<rect x="746.30" y="426.14" width="0.90" height="0.76" fill="#9a9a9a" />
<rect x="741.00" y="429.56" width="1.00" height="0.84" fill="#3f3f3f" />
<rect x="746.30" y="429.60" width="0.90" height="0.76" fill="#9a9a9a" />
<rect x="741.00" y="433.01" width="1.00" height="0.84" fill="#3f3f3f" />
<rect x="746.30" y="433.05" width="0.90" height="0.76" fill="#9a9a9a" />
<rect x="741.00" y="436.47" width="1.00" height="0.84" fill="#3f3f3f" />
<rect x="746.30" y="436.51" width="0.90" height="0.76" fill="#9a9a9a" />
<rect x="741.00" y="439.93" width="1.00" height="0.84" fill="#3f3f3f" />
<rect x="746.30" y="439.97" width="0.90" height="0.76" fill="#9a9a9a" />
<rect x="741.00" y="443.38" width="1.00" height="0.84" fill="#3f3f3f" />
<rect x="746.30" y="443.42" width="0.90" height="0.76" fill="#9a9a9a" />
<rect x="741.00" y="446.84" width="1.00" height="0.84" fill="#3f3f3f" />
<rect x="746.30" y="446.88" width="0.90" height="0.76" fill="#9a9a9a" />
<rect x="741.00" y="450.30" width="1.00" height="0.84" fill="#3f3f3f" />
<rect x="746.30" y="450.34" width="0.90" height="0.76" fill="#9a9a9a" />
<rect x="741.00" y="453.75" width="1.00" height="0.84" fill="#3f3f3f" />
<rect x="746.30" y="453.79" width="0.90" height="0.76" fill="#9a9a9a" />
<rect x="741.00" y="457.21" width="1.00" height="0.84" fill="#3f3f3f" />
<rect x="746.30" y="457.25" width="0.90" height="0.76" fill="#9a9a9a" />
<rect x="741.00" y="460.67" width="1.00" height="0.84" fill="#3f3f3f" />
<rect x="746.30" y="460.71" width="0.90" height="0.76" fill="#9a9a9a" />
<rect x="741.00" y="464.12" width="1.00" height="0.84" fill="#3f3f3f" />
<rect x="746.30" y="464.16" width="0.90" height="0.76" fill="#9a9a9a" />
<rect x="741.00" y="467.58" width="1.00" height="0.84" fill="#3f3f3f" />
<rect x="746.30" y="467.62" width="0.90" height="0.76" fill="#9a9a9a" />
<rect x="742.60" y="387.50" width="2.40" height="81.00" fill="#d3d3d1" />
<rect x="742.60" y="449.80" width="2.30" height="18.50" fill="#3585c6" />
<rect x="741.4" y="445.1" width="4.8" height="4.9" rx="0.8" fill="#fdfdfd" stroke="#c4c4c4" stroke-width="0.5"/>
<rect x="725.6" y="473" width="25.00" height="8.30" rx="0.8" fill="#ffffff" stroke="#d0cfcc" stroke-width="0.7"/>
<text transform="translate(738.10,479.19) scale(1,1.08)" font-size="5" fill="#3c3c3c" stroke="#3c3c3c" stroke-width="0.12" text-anchor="middle" font-weight="normal" >60</text>
<rect x="766.5" y="429" width="29.5" height="7.60" rx="1.2" fill="#f6f5f3" stroke="#d3d2cf" stroke-width="0.6"/>
<text transform="translate(781.30,434.84) scale(1,1.08)" font-size="5" fill="#2a2a2a" stroke="#2a2a2a" stroke-width="0.12" text-anchor="middle" font-weight="normal" >Default</text>
<rect x="766.5" y="445" width="29.5" height="7.80" rx="1.2" fill="#f6f5f3" stroke="#d3d2cf" stroke-width="0.6"/>
<text transform="translate(781.30,450.94) scale(1,1.08)" font-size="5" fill="#2a2a2a" stroke="#2a2a2a" stroke-width="0.12" text-anchor="middle" font-weight="normal" >Reset</text>
<rect x="766.5" y="461.2" width="29.5" height="7.80" rx="1.2" fill="#f6f5f3" stroke="#d3d2cf" stroke-width="0.6"/>
<text transform="translate(781.30,467.14) scale(1,1.08)" font-size="5" fill="#2a2a2a" stroke="#2a2a2a" stroke-width="0.12" text-anchor="middle" font-weight="normal" >Cancel</text>
<rect x="766.5" y="477" width="29.5" height="9.30" rx="1.2" fill="#f1f5fa" stroke="#7fb2e0" stroke-width="0.9"/>
<text transform="translate(781.30,483.69) scale(1,1.08)" font-size="5" fill="#2a2a2a" stroke="#2a2a2a" stroke-width="0.12" text-anchor="middle" font-weight="normal" >OK</text>
</g>
<g id="status-fields">
<rect x="525.60" y="489.80" width="275.90" height="10.20" fill="#efeeeb" />
<line x1="525.60" y1="489.80" x2="801.50" y2="489.80" stroke="#c3c3c1" stroke-width="0.8" />
<rect x="479.3" y="491.1" width="46.70" height="8.0" rx="1" fill="#f7f7f5" stroke="#383838" stroke-width="0.95"/>
<text transform="translate(480.80,497.13) scale(1,1.08)" font-size="4.7" fill="#3a3a3a" stroke="#3a3a3a" stroke-width="0.12" text-anchor="start" font-weight="normal" textLength="43.70" lengthAdjust="spacingAndGlyphs" >Gray Scale Line Scan</text>
<rect x="527.6" y="491.1" width="14.30" height="8.0" rx="1" fill="#f7f7f5" stroke="#383838" stroke-width="0.95"/>
<text transform="translate(529.10,497.13) scale(1,1.08)" font-size="4.7" fill="#3a3a3a" stroke="#3a3a3a" stroke-width="0.12" text-anchor="start" font-weight="normal" textLength="11.30" lengthAdjust="spacingAndGlyphs" >1 line</text>
<rect x="543.4" y="491.1" width="26.60" height="8.0" rx="1" fill="#f7f7f5" stroke="#383838" stroke-width="0.95"/>
<text transform="translate(544.90,497.13) scale(1,1.08)" font-size="4.7" fill="#3a3a3a" stroke="#3a3a3a" stroke-width="0.12" text-anchor="start" font-weight="normal" textLength="23.60" lengthAdjust="spacingAndGlyphs" >27.777 kHz</text>
<rect x="571.4" y="491.1" width="16.50" height="8.0" rx="1" fill="#f7f7f5" stroke="#383838" stroke-width="0.95"/>
<text transform="translate(572.90,497.13) scale(1,1.08)" font-size="4.7" fill="#3a3a3a" stroke="#3a3a3a" stroke-width="0.12" text-anchor="start" font-weight="normal" textLength="13.50" lengthAdjust="spacingAndGlyphs" >repeat</text>
<rect x="589.8" y="491.1" width="27.00" height="8.0" rx="1" fill="#f7f7f5" stroke="#383838" stroke-width="0.95"/>
<text transform="translate(591.30,497.13) scale(1,1.08)" font-size="4.7" fill="#3a3a3a" stroke="#3a3a3a" stroke-width="0.12" text-anchor="start" font-weight="normal" textLength="24.00" lengthAdjust="spacingAndGlyphs" >shading off</text>
<rect x="618.2" y="491.1" width="35.00" height="8.0" rx="1" fill="#f7f7f5" stroke="#383838" stroke-width="0.95"/>
<text transform="translate(619.70,497.13) scale(1,1.08)" font-size="4.7" fill="#3a3a3a" stroke="#3a3a3a" stroke-width="0.12" text-anchor="start" font-weight="normal" textLength="32.00" lengthAdjust="spacingAndGlyphs" >window 0-2048</text>
<rect x="655" y="491.1" width="35.00" height="8.0" rx="1" fill="#f7f7f5" stroke="#383838" stroke-width="0.95"/>
<text transform="translate(656.50,497.13) scale(1,1.08)" font-size="4.7" fill="#3a3a3a" stroke="#3a3a3a" stroke-width="0.12" text-anchor="start" font-weight="normal" textLength="32.00" lengthAdjust="spacingAndGlyphs" >zoom x: 1 / y: 1</text>
<rect x="691.6" y="491.1" width="9.40" height="8.0" rx="1" fill="#f7f7f5" stroke="#383838" stroke-width="0.95"/>
<text transform="translate(693.10,497.13) scale(1,1.08)" font-size="4.7" fill="#3a3a3a" stroke="#3a3a3a" stroke-width="0.12" text-anchor="start" font-weight="normal" textLength="6.40" lengthAdjust="spacingAndGlyphs" >1.0</text>
<rect x="703.1" y="491.1" width="10.50" height="8.0" rx="1" fill="#f7f7f5" stroke="#383838" stroke-width="0.95"/>
<text transform="translate(704.60,497.13) scale(1,1.08)" font-size="4.7" fill="#3a3a3a" stroke="#3a3a3a" stroke-width="0.12" text-anchor="start" font-weight="normal" textLength="7.50" lengthAdjust="spacingAndGlyphs" >488</text>
<rect x="715.7" y="491.1" width="10.20" height="8.0" rx="1" fill="#f7f7f5" stroke="#383838" stroke-width="0.95"/>
<text transform="translate(717.20,497.13) scale(1,1.08)" font-size="4.7" fill="#3a3a3a" stroke="#3a3a3a" stroke-width="0.12" text-anchor="start" font-weight="normal" textLength="7.20" lengthAdjust="spacingAndGlyphs" >0x0</text>
<rect x="727.6" y="491.1" width="14.70" height="8.0" rx="1" fill="#f7f7f5" stroke="#383838" stroke-width="0.95"/>
<text transform="translate(729.10,497.13) scale(1,1.08)" font-size="4.7" fill="#3a3a3a" stroke="#3a3a3a" stroke-width="0.12" text-anchor="start" font-weight="normal" textLength="11.70" lengthAdjust="spacingAndGlyphs" >0 fl/s</text>
<rect x="743.9" y="491.1" width="23.00" height="8.0" rx="1" fill="#f7f7f5" stroke="#383838" stroke-width="0.95"/>
<text transform="translate(745.40,497.13) scale(1,1.08)" font-size="4.7" fill="#3a3a3a" stroke="#3a3a3a" stroke-width="0.12" text-anchor="start" font-weight="normal" textLength="20.00" lengthAdjust="spacingAndGlyphs" >11.43 f/s</text>
<rect x="768.5" y="491.1" width="23.70" height="8.0" rx="1" fill="#f7f7f5" stroke="#383838" stroke-width="0.95"/>
<text transform="translate(770.00,497.13) scale(1,1.08)" font-size="4.7" fill="#3a3a3a" stroke="#3a3a3a" stroke-width="0.12" text-anchor="start" font-weight="normal" textLength="20.70" lengthAdjust="spacingAndGlyphs" >0.56 MB/s</text>
<line x1="80.00" y1="499.60" x2="801.50" y2="499.60" stroke="#cfcfcd" stroke-width="0.8" />
</g>
</g>
<g id="signal"><path d="M124.6,155.94 125.0,156.03 125.5,156.39 126.0,156.10 126.4,155.63 126.9,154.95 127.3,155.86 127.8,154.99 128.2,156.11 128.7,155.72 129.1,155.93 129.5,156.57 130.0,155.98 130.4,156.58 130.9,156.05 131.3,156.05 131.8,155.81 132.2,155.57 132.7,156.10 133.1,156.14 133.6,155.86 134.0,156.67 134.5,156.29 134.9,156.70 135.4,156.33 135.8,156.62 136.3,157.16 136.7,156.47 137.2,156.22 137.6,156.46 138.1,156.58 138.5,157.05 139.0,156.92 139.4,157.73 139.9,157.29 140.3,156.81 140.8,157.27 141.2,156.79 141.7,157.03 142.1,156.28 142.6,155.61 143.0,155.97 143.5,155.17 143.9,155.93 144.4,155.22 144.8,155.96 145.3,156.42 145.7,155.80 146.2,156.29 146.6,156.06 147.1,155.85 147.5,155.93 148.0,155.88 148.4,155.63 148.9,155.80 149.3,156.53 149.8,156.51 150.2,156.11 150.7,157.31 151.1,157.64 151.6,156.98 152.0,156.77 152.5,155.71 152.9,155.59 153.4,155.42 153.8,155.14 154.3,155.15 154.7,155.45 155.2,155.02 155.6,155.19 156.1,155.01 156.5,156.51 157.0,156.02 157.4,155.29 157.9,155.45 158.3,155.82 158.8,156.28 159.2,155.56 159.7,155.59 160.1,156.75 160.6,156.87 161.0,156.27 161.5,156.42 161.9,156.55 162.4,155.83 162.8,157.07 163.3,157.24 163.7,157.45 164.2,156.85 164.6,156.14 165.1,155.95 165.5,156.24 166.0,156.53 166.4,157.57 166.9,157.29 167.3,156.73 167.8,156.35 168.2,157.24 168.7,157.10 169.1,157.53 169.6,156.88 170.0,157.42 170.3,157.00 M173.5,156.60 173.9,157.29 174.4,157.21 174.8,157.03 175.3,157.06 175.7,157.49 176.2,156.81 176.6,156.35 177.1,157.47 177.5,157.07 178.0,157.37 178.4,157.02 178.9,156.03 179.3,157.22 179.8,157.51 180.2,157.33 180.7,156.90 181.1,156.66 181.6,156.70 182.0,156.30 182.5,156.52 182.9,155.99 183.4,156.68 183.8,156.69 184.3,156.35 184.7,155.88 185.2,156.06 185.6,156.29 186.1,155.73 186.5,156.21 187.0,156.09 187.4,156.55 187.9,155.99 188.3,155.56 188.8,156.24 189.2,156.67 189.7,156.79 190.1,156.96 190.6,157.15 191.0,156.90 191.5,157.31 191.9,157.43 192.4,157.16 192.8,157.87 193.3,157.22 193.7,157.05 194.2,156.35 194.6,156.42 195.1,157.04 195.5,156.53 196.0,156.14 196.4,157.47 196.9,157.15 197.3,156.56 197.8,157.46 198.2,156.64 198.7,156.57 199.1,156.25 199.6,156.20 200.0,156.73 200.5,156.13 200.9,156.53 201.4,156.66 201.8,157.05 202.3,155.92 202.7,156.13 203.2,155.35 203.6,156.30 204.1,156.06 204.5,156.51 205.0,156.47 205.4,155.44 205.9,156.18 206.3,156.41 206.8,156.54 207.2,156.28 207.7,156.01 208.1,155.58 208.6,156.46 209.0,155.48 209.5,155.78 209.9,155.43 210.4,155.20 210.4,156.20 M213.3,156.30 213.8,155.35 214.2,155.80 214.6,155.81 215.1,155.59 215.5,155.46 216.0,156.42 216.4,156.11 216.9,156.26 217.3,156.97 217.8,157.38 218.2,156.89 218.7,157.60 219.1,157.25 219.6,157.24 220.0,156.80 220.5,156.10 220.9,156.40 221.4,155.65 221.8,156.12 222.3,156.48 222.7,155.89 223.2,156.04 223.6,155.81 224.1,156.31 224.5,156.50 225.0,156.78 225.4,156.02 225.9,155.67 226.3,155.96 226.8,155.81 227.2,155.23 227.7,155.20 228.1,154.58 228.6,154.91 229.0,155.60 229.5,156.21 229.9,156.81 230.4,156.18 230.8,156.56 231.3,157.32 231.7,157.04 232.2,157.25 232.6,157.66 233.1,156.92 233.5,157.27 234.0,157.58 234.4,157.69 234.9,157.60 235.3,156.54 235.8,156.52 236.2,156.69 236.7,156.62 237.1,156.88 237.6,156.17 238.0,157.33 238.5,157.08 238.9,156.71 239.4,157.12 239.8,156.64 240.3,156.81 240.7,157.87 241.2,157.16 241.6,157.42 242.1,157.57 242.5,157.05 243.0,156.80 243.4,157.09 243.9,156.78 244.3,156.57 244.8,157.24 245.2,156.97 245.7,157.14 246.1,156.70 246.6,157.16 247.0,158.37 247.5,157.22 247.9,158.06 248.4,157.15 248.8,157.54 249.3,156.84 249.7,156.46 250.2,156.58 250.6,157.32 251.1,157.87 251.5,157.71 252.0,156.70 252.4,156.68 252.9,156.48 253.3,156.22 253.8,156.68 254.2,156.20 254.7,156.02 255.1,157.19 255.6,157.14 256.0,157.07 256.5,157.76 256.9,157.35 257.4,156.64 257.8,157.09 258.3,157.04 258.7,156.13 259.2,156.16 259.6,156.97 260.1,157.29 260.5,157.55 261.0,157.58 261.4,157.17 261.9,157.75 262.3,158.10 262.8,157.09 263.2,157.52 263.7,157.59 264.1,157.71 264.4,155.50 M272.9,156.40 273.3,157.63 273.8,157.71 274.2,157.74 274.7,157.03 275.1,157.51 275.6,156.76 276.0,158.03 276.5,156.98 276.9,156.57 277.4,156.43 277.8,156.39 278.3,157.23 278.7,157.01 279.2,157.05 279.6,156.74 280.1,156.27 280.5,156.67 281.0,157.23 281.4,157.15 281.9,156.90 282.3,157.01 282.8,157.92 283.2,157.32 283.7,157.50 284.1,157.61 284.6,157.10 285.0,157.93 285.5,158.13 285.9,157.84 286.4,157.19 286.8,157.73 287.3,158.15 287.7,158.23 288.2,157.83 288.6,157.52 289.1,157.40 289.5,156.90 290.0,156.48 290.4,157.18 290.9,156.13 291.3,156.81 291.8,156.38 292.2,156.32 292.7,156.67 293.1,157.41 293.6,157.59 294.0,157.01 294.5,157.96 294.9,156.93 295.4,157.60 295.8,157.03 296.3,157.91 296.7,156.62 297.2,156.89 297.6,156.87 298.1,157.76 298.5,157.13 299.0,157.68 299.4,157.80 299.9,157.96 300.3,157.89 300.8,157.02 301.2,156.97 301.7,157.74 301.9,156.60 M303.4,156.80 303.8,156.77 304.3,157.17 304.7,155.89 305.2,155.96 305.6,157.08 306.1,157.52 306.5,157.26 307.0,157.57 307.4,156.84 307.9,157.36 308.3,157.14 308.8,156.43 309.2,156.63 309.7,156.90 310.1,157.44 310.6,157.88 311.0,157.73 311.5,157.23 311.9,157.58 312.4,156.68 312.8,156.77 313.3,157.53 313.7,156.95 314.2,156.47 314.6,157.15 315.1,158.07 315.5,157.15 316.0,157.96 316.4,157.73 316.9,157.02 317.3,157.04 317.8,157.40 318.2,157.17 318.7,157.32 319.1,158.28 319.6,157.31 320.0,157.44 320.5,157.49 320.9,158.31 321.4,158.54 321.8,157.99 322.3,157.69 322.7,157.57 323.2,157.88 323.6,156.81 324.1,156.87 324.5,157.23 325.0,157.70 325.4,156.48 325.9,156.58 326.3,156.84 326.8,156.59 327.2,157.08 327.7,157.57 328.1,156.94 328.6,157.45 329.0,157.53 329.5,157.51 329.9,157.21 330.4,157.52 330.8,157.01 331.3,157.64 331.7,156.83 332.2,157.62 332.6,157.47 333.1,158.13 333.5,158.48 334.0,157.21 334.4,156.68 334.9,157.62 335.3,157.77 335.8,158.11 336.2,158.09 336.7,157.71 337.1,158.22 337.6,157.53 338.0,156.92 338.5,157.10 338.9,156.86 339.4,156.51 339.8,156.62 340.3,156.50 340.7,157.24 341.2,156.32 341.6,156.78 342.1,156.50 342.5,156.87 343.0,156.42 343.4,157.06 343.9,156.55 344.3,156.37 344.8,157.50 345.2,156.53 345.7,156.82 346.1,157.11 346.6,157.04 347.0,157.10 347.5,156.36 347.9,156.38 348.4,157.06 348.8,156.44 349.3,156.33 349.7,155.88 350.2,156.79 350.6,156.07 351.1,157.08 351.5,155.96 352.0,157.48 352.4,156.49 352.9,157.33 353.3,157.96 353.8,157.68 354.2,157.91 354.7,158.34 355.1,157.83 355.6,157.64 356.0,157.56 356.5,156.96 356.9,157.90 357.4,157.04 357.8,156.77 358.3,157.19 358.7,157.71 359.2,157.50 359.6,157.65 360.1,157.61 360.5,157.29 361.0,156.99 361.4,156.62 361.9,157.54 362.3,156.84 362.8,156.74 363.2,156.74 363.7,156.42 364.1,156.11 364.6,156.39 365.0,157.46 365.5,156.69 365.9,157.06 366.4,157.26 366.8,158.50 367.3,158.42 367.7,158.16 368.2,158.07 368.6,157.56 369.1,158.59 369.5,157.38 370.0,157.38 370.4,157.82 370.9,157.87 371.3,158.56 371.8,157.41 372.2,157.42 372.7,156.75 373.1,157.26 373.6,157.47 374.0,157.06 374.5,156.48 374.9,156.56 375.4,157.23 375.8,157.69 376.3,157.41 376.7,156.95 377.2,157.14 377.6,157.95 378.1,157.92 378.5,157.16 379.0,157.22 379.4,157.69 379.9,158.53 380.3,158.14 380.8,157.12 381.2,156.75 381.7,157.20 382.1,157.72 382.6,156.61 383.0,156.60 383.5,156.49 383.9,156.20 384.4,156.32 384.8,156.16 385.3,156.71 385.7,156.94 386.2,155.94 386.6,156.23 387.1,156.95 387.5,156.38 388.0,156.42 388.4,156.32 388.9,156.69 389.3,157.53 389.8,157.47 390.2,156.64 390.7,156.33 391.1,156.59 391.6,156.01 392.0,156.22 392.5,156.53 392.9,156.72 393.4,156.63 393.8,156.63 394.3,156.89 394.7,157.11 395.2,156.83 395.6,156.79 396.1,157.09 396.5,156.46 397.0,156.18 397.4,156.89 397.9,157.30 398.3,156.93 398.8,157.19 399.2,157.58 399.7,157.43 400.1,157.43 400.6,157.51 401.0,157.40 401.5,158.36 401.9,157.83 402.4,158.09 402.8,158.31 403.3,158.11 403.7,158.50 404.2,158.20 404.6,158.33 405.1,158.02 405.5,157.56 406.0,157.54 406.4,157.41 406.9,156.14 407.3,156.84 407.8,155.97 407.8,157.00 M413.5,156.80 413.9,155.54 414.4,156.58 414.8,157.03 415.3,156.52 415.7,156.77 416.2,157.31 416.6,156.92 417.1,157.54 417.5,156.38 418.0,155.90 418.4,157.24 418.9,157.46 419.3,157.03 419.8,156.43 420.2,156.87 420.7,156.95 421.1,156.33 421.6,156.73 422.0,156.29 422.5,157.09 422.9,157.60 423.4,156.88 423.8,157.27 424.3,157.10 424.7,156.67 425.2,156.95 425.6,157.34 426.1,156.81 426.5,157.96 427.0,156.91 427.4,157.30 427.9,156.71 428.3,157.02 428.8,157.01 429.2,156.12 429.7,156.78 430.1,156.63 430.6,156.51 431.0,156.89 431.5,156.66 431.9,156.69 432.4,156.82 432.8,157.15 433.3,157.07 433.7,157.73 434.2,157.97 434.6,157.20 435.1,157.57 435.5,157.71 436.0,157.17 436.4,157.39 436.9,157.50 437.3,156.85 437.8,157.34 438.2,156.86 438.7,157.07 439.1,156.83 439.6,157.67 440.0,156.58 440.5,156.58 440.9,156.51 441.4,156.44 441.8,157.60 442.3,157.46 442.7,156.49 443.2,157.54 443.6,157.40 444.1,157.30 444.5,156.47 445.0,156.26 445.4,157.08 445.9,157.05 446.3,157.19 446.8,157.01 447.2,157.14 447.7,157.28 448.1,157.71 448.6,157.04 449.0,157.99 449.5,158.03 449.9,158.29 450.4,158.07 450.8,157.95 451.3,157.25 451.7,157.86 452.2,157.44 452.6,157.53 453.1,157.57 453.5,158.27 454.0,157.58 454.4,157.56 454.9,158.15 455.3,157.17 455.8,157.13 456.2,157.37 456.7,157.04 457.1,157.31 457.6,157.28 458.0,157.52 458.5,157.88 458.9,157.30 459.4,157.33 459.8,157.25 460.3,156.19 460.7,156.46 461.2,156.12 461.6,156.54 462.1,156.08 462.5,156.50 463.0,156.89 463.4,157.00 463.9,156.36 464.3,156.72 464.8,157.03 465.2,157.00 465.7,157.24 466.1,156.85 466.6,157.47 467.0,156.91 467.5,156.81 467.9,157.43 468.4,157.65 468.8,157.43 469.3,157.24 469.7,157.30 470.2,156.61 470.6,156.75 471.1,156.96 471.5,156.91 472.0,157.94 472.4,157.44 472.9,157.85 473.3,157.52 473.8,156.80 474.2,157.35 474.7,156.83 475.1,156.36 475.2,157.00 M477.6,157.00 478.1,156.90 478.5,156.19 478.9,157.44 479.4,157.26 479.8,157.35 480.3,157.70 480.7,157.95 481.2,157.47 481.6,157.58 482.1,157.69 482.5,157.09 483.0,156.70 483.4,156.66 483.9,156.77 484.3,157.19 484.8,157.67 485.2,157.18 485.7,156.94 486.1,157.50 486.6,156.96 487.0,157.11 487.5,157.84 487.9,157.30 488.4,157.88 488.8,157.77 489.3,157.27 489.7,157.19 490.2,158.02 490.6,158.05 491.1,157.46 491.5,157.80 492.0,157.14 492.4,157.23 492.9,157.31 493.3,157.75 493.8,157.54 494.2,158.27 494.7,158.17 495.0,156.40 M530.0,157.40 530.5,157.64 530.9,157.72 531.4,158.08 531.8,157.55 532.3,157.81 532.7,157.09 533.2,156.54 533.6,157.57 534.1,157.97 534.5,158.21 535.0,158.29 535.4,158.40 535.9,158.08 536.3,158.42 536.8,158.19 537.2,157.67 537.7,158.85 538.1,158.32 538.6,159.00 539.0,158.35 539.5,158.21 539.9,157.97 540.4,158.64 540.8,157.74 541.3,156.82 541.7,157.74 542.2,158.06 542.6,157.47 543.1,158.22 543.5,158.22 544.0,157.67 544.4,157.91 544.9,157.30 545.3,157.56 545.8,157.59 546.2,157.21 546.7,156.09 547.1,156.78 547.6,157.10 548.0,157.38 548.5,157.83 548.9,157.31 549.4,158.16 549.8,158.38 550.3,158.19 550.7,157.42 551.2,157.65 551.6,157.43 552.1,157.99 552.5,157.85 553.0,157.05 553.4,157.58 553.9,157.72 554.3,157.59 554.8,157.42 555.2,157.44 555.7,157.82 556.1,158.37 556.6,157.91 557.0,158.22 557.5,158.33 557.9,157.95 558.4,158.73 558.8,158.22 559.3,158.75 559.7,158.38 560.2,158.72 560.6,158.34 561.1,157.76 561.5,158.07 562.0,158.76 562.4,158.22 562.9,158.63 563.3,158.06 563.8,158.99 564.2,159.23 564.7,158.08 565.1,158.88 565.6,158.48 566.0,158.36 566.5,158.90 566.9,158.28 567.4,158.59 567.8,158.56 568.3,158.49 568.7,158.16 569.2,158.95 569.6,158.90 570.1,158.86 570.5,158.05 571.0,158.29 571.4,158.05 571.9,157.97 572.3,157.17 572.8,158.15 573.2,158.06 573.7,157.90 574.1,158.23 574.6,157.90 575.0,158.50 575.5,158.39 575.9,158.22 576.4,158.67 576.8,159.45 577.3,159.87 577.7,158.47 578.2,158.25 578.6,157.67 579.1,158.69 579.5,158.77 580.0,158.24 580.4,158.68 580.9,158.87 581.3,158.22 581.8,158.86 582.2,158.44 582.7,158.13 583.1,159.52 583.6,158.13 584.0,158.22 584.5,159.27 584.9,158.62 585.4,159.56 585.8,159.89 586.3,158.40 586.7,159.51 587.2,158.92 587.6,159.43 588.1,158.48 588.5,158.01 589.0,158.08 589.4,157.83 589.9,157.93 590.3,158.39 590.8,158.72 591.2,158.52 591.7,158.94 592.1,158.13 592.6,158.34 593.0,158.49 593.5,158.19 593.9,158.72 594.4,158.48 594.8,158.09 595.3,158.88 595.7,158.86 596.2,158.18 596.6,157.76 597.1,158.29 597.5,158.19 598.0,158.55 598.4,158.36 598.9,157.99 599.3,157.61 599.8,157.81 600.2,157.60 600.7,158.48 601.1,159.05 601.6,158.00 602.0,158.24 602.5,158.75 602.9,158.91 603.4,159.49 603.8,158.63 604.3,159.50 604.7,158.99 605.2,159.14 605.6,159.04 606.1,159.34 606.5,158.90 607.0,158.32 607.4,158.90 607.9,158.37 608.3,159.08 608.8,159.27 609.2,158.37 609.7,159.01 610.1,158.82 610.6,159.39 611.0,160.23 611.5,159.16 611.9,159.97 612.4,159.96 612.8,160.08 613.3,159.10 613.7,159.38 614.2,158.77 614.6,158.76 615.1,158.66 615.5,159.24 616.0,158.94 616.4,158.92 616.9,158.69 617.3,158.86 617.8,158.96 618.2,158.47 618.7,159.18 619.1,158.67 619.6,159.22 620.0,158.00 620.5,158.42 620.9,158.45 621.4,158.58 621.8,158.42 622.3,159.52 622.7,158.40 623.2,158.87 623.6,158.29 624.1,158.29 624.5,159.27 625.0,158.66 625.4,158.56 625.9,159.79 626.3,159.10 626.8,159.57 627.2,159.88 627.7,159.47 628.1,159.15 628.6,159.79 629.0,160.03 629.5,160.23 629.9,159.33 630.4,160.25 630.8,159.37 631.3,159.42 631.7,159.09 632.2,159.47 632.6,158.57 633.1,159.80 633.5,160.06 634.0,160.56 634.4,159.89 634.9,160.13 635.3,160.16 635.8,160.76 636.2,160.00 636.7,160.08 637.1,160.26 637.6,160.29 638.0,159.74 638.5,160.08 638.9,159.70 639.4,159.34 639.8,158.91 640.3,159.03 640.7,158.70 641.2,158.70 641.6,159.25 642.1,159.42 642.5,159.23 643.0,159.10 643.4,159.20 643.9,158.81 644.3,158.90 644.8,158.97 645.2,158.34 645.7,158.74 646.1,159.17 646.6,159.56 647.0,159.21 647.5,158.20 647.9,159.13 648.4,158.70 648.8,159.15 649.3,158.32 649.7,159.50 650.2,158.78 650.6,159.12 651.1,159.56 651.5,159.60 652.0,160.11 652.4,160.06 652.9,160.55 653.3,160.24 653.8,160.34 654.2,161.07 654.7,161.30 655.1,160.62 655.6,161.27 656.0,160.67 656.5,160.56 656.9,160.49 657.4,160.54 657.8,160.08 658.0,159.70 M663.9,160.00 664.4,161.09 664.8,160.55 665.3,160.01 665.7,159.95 666.2,159.55 666.6,160.26 667.1,161.13 667.5,160.81 668.0,161.37 668.4,159.83 668.9,160.38 669.3,161.09 669.8,161.30 670.2,160.72 670.7,160.70 671.1,160.71 671.6,160.91 672.0,160.62 672.5,160.02 672.9,160.17 673.4,160.64 673.8,160.71 674.3,160.76 674.7,160.92 675.2,161.37 675.6,160.41 676.1,161.43 676.5,160.57 677.0,161.53 677.4,162.06 677.9,161.67 678.3,160.99 678.8,161.14 679.2,160.39 679.7,160.96 680.1,161.21 680.6,160.30 681.0,161.01 681.5,160.71 681.8,160.50 M683.6,160.60 684.1,159.89 684.5,160.65 685.0,160.43 685.4,160.82 685.9,160.70 686.3,161.17 686.8,160.63 687.2,160.00 687.7,160.28 688.1,159.98 688.6,160.81 689.0,160.98 689.5,159.72 689.9,160.44 690.4,160.74 690.8,160.33 691.3,160.70 691.7,160.29 692.2,160.37 692.6,160.57 693.1,160.87 693.5,160.55 694.0,159.77 694.4,161.23 694.9,161.13 695.0,161.00 M698.5,159.80 699.0,160.98 699.4,161.81 699.9,161.79 700.3,160.92 700.8,160.99 701.2,161.52 701.7,161.45 702.1,160.55 702.6,160.49 703.0,161.16 703.5,161.03 703.9,161.35 704.4,160.89 704.8,161.36 705.3,160.64 705.7,160.46 706.2,160.05 706.6,160.70 707.1,160.85 707.5,160.11 708.0,160.47 708.4,161.30 708.9,160.96 709.3,161.47 709.8,161.66 710.2,161.43 710.7,160.75 711.1,160.69 711.6,161.12 712.0,161.93 712.5,161.39 712.9,161.46 713.4,161.72 713.8,162.13 714.3,162.09 714.7,161.84 715.2,161.54 715.6,161.19 716.1,161.73 716.5,161.41 717.0,161.00 717.4,160.94 717.9,160.40 718.3,160.54 718.8,160.87 719.2,160.51 719.7,161.53 720.1,162.12 720.6,161.14 721.0,161.20 721.5,161.15 721.9,161.51 722.4,161.36 722.8,161.88 723.3,161.81 723.7,162.21 724.2,162.27 724.6,161.07 725.1,160.98 725.5,161.11 726.0,160.71 726.4,160.89 726.9,161.80 727.3,161.74 727.8,162.17 728.2,161.29 728.7,162.53 729.1,161.51 729.6,162.51 730.0,161.63 730.5,161.90 730.9,161.85 731.4,161.33 731.8,161.94 732.3,162.70 732.7,161.66 733.2,162.51 733.6,163.19 734.1,163.48 734.5,163.07 735.0,162.78 735.4,162.48 735.9,162.48 736.3,162.58 736.8,163.52 737.2,162.88 737.7,163.40 738.1,162.90 738.6,162.48 739.0,162.20 739.5,161.95 739.9,162.78 740.4,162.05 740.8,162.34 741.3,162.71 741.7,163.06 742.2,162.36 742.6,162.53 743.0,162.50 M748.0,163.20 748.5,162.82 748.9,162.46 749.4,162.44 749.8,163.20 750.3,162.24 750.7,162.10 751.2,161.84 751.6,162.16 752.1,161.64 752.5,162.02 753.0,161.72 753.4,161.29 753.9,162.81 754.3,162.46 754.8,162.92 755.2,162.51 755.7,162.22 756.1,162.18 756.6,163.38 757.0,163.84 757.4,163.20" fill="none" stroke="#0a0a0a" stroke-width="0.72" stroke-linejoin="round"/><path d="M170.3,157.00 170.9,163.20 171.9,164.60 172.9,163.20 173.5,156.60 M210.4,156.20 211.2,153.60 211.9,152.40 212.6,155.00 213.3,156.30 M264.4,155.50 264.9,154.20 265.4,212.00 266.8,226.50 267.7,228.50 268.6,222.00 270.0,198.00 271.3,178.00 271.9,158.00 272.3,153.00 272.9,156.40 M301.9,156.60 302.7,153.40 303.4,156.80 M407.8,157.00 408.4,148.00 408.9,157.00 409.5,182.00 409.9,160.00 410.4,150.50 410.9,156.00 412.0,154.60 413.5,156.80 M475.2,157.00 475.8,163.70 476.6,163.00 477.0,154.00 477.6,157.00 M495.0,156.40 495.8,155.50 496.3,199.50 497.2,199.50 497.8,217.80 498.4,217.00 499.0,199.00 499.6,175.00 500.4,152.00 501.3,156.00 502.3,156.00 503.0,145.50 503.7,156.00 504.3,199.30 504.9,170.00 505.5,143.00 506.1,155.00 506.6,141.20 507.3,155.50 508.0,156.00 509.5,156.40 511.0,155.80 512.8,156.00 513.4,151.00 513.7,172.80 514.8,172.80 515.2,183.20 515.7,172.80 517.8,172.50 518.1,153.50 519.0,153.80 520.5,155.50 521.5,154.50 523.0,157.00 525.0,158.20 526.5,159.00 528.5,157.60 530.0,157.40 M658.0,159.70 658.6,153.20 659.0,189.20 659.6,189.00 660.0,154.00 660.6,159.80 662.6,160.00 663.3,163.70 663.9,160.00 M681.8,160.50 682.4,164.20 683.0,159.00 683.6,160.60 M695.0,161.00 695.5,156.50 696.0,187.40 696.6,175.00 696.9,157.00 697.5,160.40 698.5,159.80 M743.0,162.50 743.6,168.60 744.2,162.50 745.5,162.00 746.4,157.70 747.3,162.50 748.0,163.20" fill="none" stroke="#000" stroke-width="0.5" stroke-linejoin="round"/><line x1="171.9" y1="163.2" x2="171.9" y2="165.1" stroke="#111" stroke-width="1.3"/><line x1="265.3" y1="197" x2="265.3" y2="211.5" stroke="#222" stroke-width="0.8"/><line x1="409.6" y1="167.7" x2="409.6" y2="182" stroke="#222" stroke-width="0.8"/><line x1="476.0" y1="158.5" x2="476.0" y2="163.7" stroke="#444" stroke-width="0.6"/><line x1="497.8" y1="186" x2="497.8" y2="217.5" stroke="#333" stroke-width="0.75"/><line x1="504.5" y1="191" x2="504.5" y2="199.5" stroke="#333" stroke-width="0.7"/><line x1="515.1" y1="173.5" x2="515.1" y2="183.0" stroke="#555" stroke-width="0.5"/><line x1="658.7" y1="154" x2="658.7" y2="189" stroke="#555" stroke-width="0.7"/><line x1="659.5" y1="154" x2="659.5" y2="189" stroke="#666" stroke-width="0.6"/><line x1="695.9" y1="157.5" x2="695.9" y2="187.4" stroke="#444" stroke-width="0.7"/><line x1="743.6" y1="162.5" x2="743.6" y2="168.5" stroke="#666" stroke-width="0.5"/><line x1="663.3" y1="160" x2="663.3" y2="163.7" stroke="#444" stroke-width="0.6"/><line x1="682.4" y1="160.5" x2="682.4" y2="164.2" stroke="#444" stroke-width="0.6"/></g>
</svg>
</body>
</html>
